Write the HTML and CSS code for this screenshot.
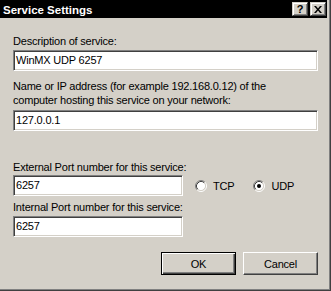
FILE: index.html
```html
<!DOCTYPE html>
<html lang="en">
<head>
  <meta charset="UTF-8">
  <title>Service Settings</title>
  <link rel="stylesheet" href="styles.css">
</head>
<body>
  <div class="window">
    <div class="titlebar">
      <span class="title">Service Settings</span>
      <div class="caption-buttons">
        <span class="cbtn help">?</span>
        <span class="cbtn close">
          <svg width="8" height="7" viewBox="0 0 8 7">
            <path d="M0 0h2l2 2.5L6 0h2L5 3.5 8 7H6L4 4.5 2 7H0l3-3.5z" fill="#000"/>
          </svg>
        </span>
      </div>
    </div>

    <div class="content">
      <div class="lbl first">Description of service:</div>
      <div class="field wide">WinMX UDP 6257</div>

      <div class="lbl two">Name or IP address (for example 192.168.0.12) of the<br>computer hosting this service on your network:</div>
      <div class="field wide after-two">127.0.0.1</div>

      <div class="lbl ext">External Port number for this service:</div>
      <div class="port-row">
        <div class="field short">6257</div>
        <div class="radio">
          <svg width="12" height="12" viewBox="0 0 12 12">
            <circle cx="6" cy="6" r="4.5" fill="#fff"/>
            <path d="M9.89 2.11A5.5 5.5 0 0 0 2.11 9.89" stroke="#808080" fill="none"/>
            <path d="M9.18 2.82A4.5 4.5 0 0 0 2.82 9.18" stroke="#404040" fill="none"/>
            <path d="M2.11 9.89A5.5 5.5 0 0 0 9.89 2.11" stroke="#fff" fill="none"/>
            <path d="M2.82 9.18A4.5 4.5 0 0 0 9.18 2.82" stroke="#d4d0c8" fill="none"/>
          </svg>
          <span>TCP</span>
        </div>
        <div class="radio">
          <svg width="12" height="12" viewBox="0 0 12 12">
            <circle cx="6" cy="6" r="4.5" fill="#fff"/>
            <path d="M9.89 2.11A5.5 5.5 0 0 0 2.11 9.89" stroke="#808080" fill="none"/>
            <path d="M9.18 2.82A4.5 4.5 0 0 0 2.82 9.18" stroke="#404040" fill="none"/>
            <path d="M2.11 9.89A5.5 5.5 0 0 0 9.89 2.11" stroke="#fff" fill="none"/>
            <path d="M2.82 9.18A4.5 4.5 0 0 0 9.18 2.82" stroke="#d4d0c8" fill="none"/>
            <circle cx="6" cy="6" r="2" fill="#000"/>
          </svg>
          <span>UDP</span>
        </div>
      </div>

      <div class="lbl int">Internal Port number for this service:</div>
      <div class="field short">6257</div>

      <div class="actions">
        <button class="btn default">OK</button>
        <button class="btn">Cancel</button>
      </div>
    </div>
  </div>
</body>
</html>
```

FILE: styles.css
```css
html, body {
  margin: 0;
  padding: 0;
}

body {
  background: #d4d0c8;
  font-family: 'Liberation Sans', Arial, sans-serif;
  font-size: 11px;
  color: #000;
}

.window {
  width: 331px;
  height: 291px;
  box-sizing: border-box;
  padding: 0 4px 4px 0;
  background: #d4d0c8;
  box-shadow: inset -1px -1px #404040, inset -2px -2px #808080;
}

.titlebar {
  height: 18px;
  background: #000;
  display: flex;
  align-items: center;
  justify-content: space-between;
  padding: 0 1px 0 3px;
}

.title {
  color: #fff;
  font-weight: bold;
  font-size: 11.5px;
  line-height: 14px;
  padding-top: 1px;
}

.caption-buttons {
  display: flex;
  gap: 2px;
}

.cbtn {
  width: 16px;
  height: 14px;
  box-sizing: border-box;
  background: #d4d0c8;
  border: 1px solid;
  border-color: #d4d0c8 #404040 #404040 #d4d0c8;
  box-shadow: inset 1px 1px #fff, inset -1px -1px #808080;
  display: flex;
  align-items: center;
  justify-content: center;
  font-weight: bold;
  font-size: 11px;
  line-height: 12px;
}

.content {
  padding: 0 0 0 13px;
  letter-spacing: -0.2px;
}

.lbl {
  line-height: 13px;
  white-space: nowrap;
}

.lbl.first { margin-top: 17px; }
.lbl.two { margin-top: 8px; line-height: 14px; }
.lbl.ext { margin-top: 30px; }
.lbl.int { margin-top: 5px; }

.field {
  height: 21px;
  box-sizing: border-box;
  background: #fff;
  border: 1px solid;
  border-color: #808080 #fff #fff #808080;
  box-shadow: inset 1px 1px #404040, inset -1px -1px #d4d0c8;
  padding: 0 2px;
  line-height: 19px;
  margin-top: 2px;
}

.field.after-two { margin-top: 3px; }
.field.wide { width: 305px; }
.field.short { width: 170px; }

.port-row {
  display: flex;
  align-items: center;
  margin-top: 1px;
}

.port-row .field {
  margin-top: 0;
}

.radio {
  display: flex;
  align-items: center;
  gap: 6px;
  margin-left: 12px;
}

.radio + .radio {
  margin-left: 19px;
}

.radio svg {
  display: block;
}

.actions {
  display: flex;
  justify-content: flex-end;
  gap: 7px;
  width: 305px;
  margin-top: 15px;
}

.btn {
  width: 75px;
  height: 23px;
  box-sizing: border-box;
  font-family: inherit;
  font-size: 11px;
  letter-spacing: -0.2px;
  color: #000;
  background: #d4d0c8;
  border: 1px solid;
  border-color: #fff #404040 #404040 #fff;
  box-shadow: inset -1px -1px #808080;
  padding: 0;
}

.btn.default {
  border: 1px solid #000;
  box-shadow: inset 1px 1px #fff, inset -1px -1px #404040, inset -2px -2px #808080;
}
```
